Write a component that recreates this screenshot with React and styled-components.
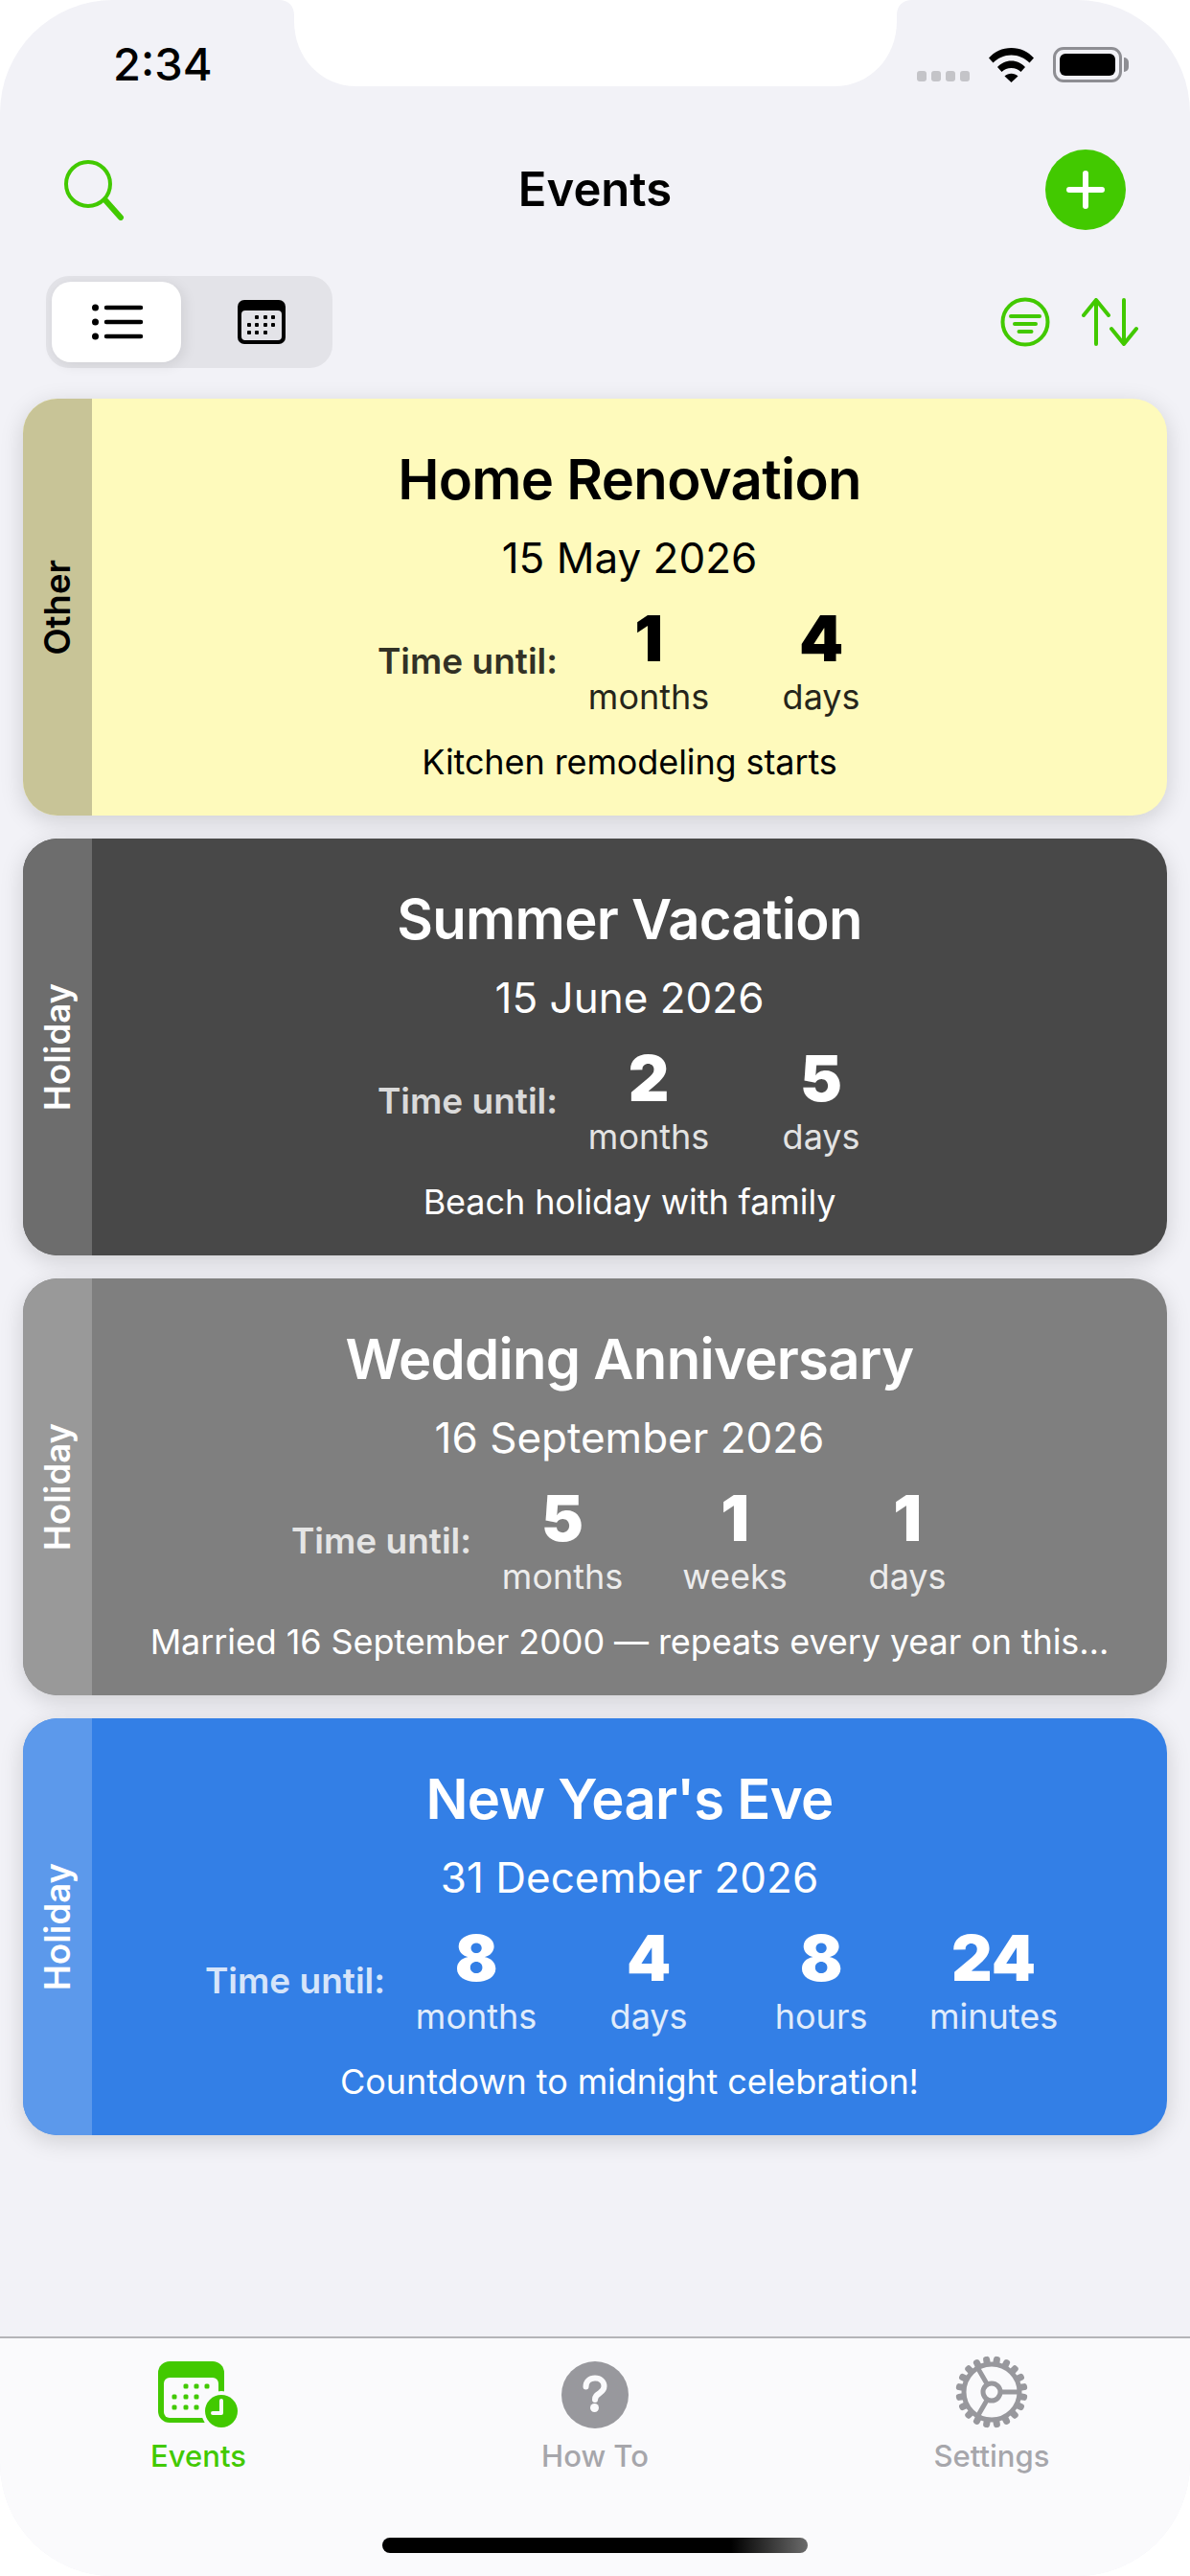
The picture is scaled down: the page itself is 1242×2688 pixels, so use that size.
import React from 'react';
import styled, { createGlobalStyle } from 'styled-components';

const GREEN = '#42c900';
const TAB_GREY = '#98989d';

const GlobalStyle = createGlobalStyle`
  html, body {
    margin: 0;
    padding: 0;
    background: #fff;
  }
  * {
    box-sizing: border-box;
  }
`;

// page shell
const Screen = styled.div`
  position: relative;
  width: 1242px;
  height: 2688px;
  display: flex;
  flex-direction: column;
  overflow: hidden;
  border-radius: 118px;
  background: #f2f2f7;
  font-family: Inter, "Noto Sans", "Liberation Sans", sans-serif;
  color: #000;
`;

const Notch = styled.svg`
  position: absolute;
  top: 0;
  left: 291px;
`;

const StatusBar = styled.div`
  height: 156px;
  padding: 43px 71px 0 118px;
  display: flex;
  align-items: flex-start;
  justify-content: space-between;
`;

const Clock = styled.span`
  font-size: 47px;
  line-height: 48px;
  font-weight: 500;
`;

const StatusIcons = styled.div`
  display: flex;
  align-items: center;
  height: 37px;
  margin-top: 6px;
`;

const SignalDots = styled.div`
  display: flex;
  gap: 5px;
  margin-top: 24px;
  margin-right: 20px;
`;

const SignalDot = styled.i`
  display: block;
  width: 10px;
  height: 11px;
  border-radius: 3px;
  background: #c4c4c8;
`;

const Battery = styled.div`
  width: 72px;
  height: 37px;
  margin-left: 20px;
  padding: 4px;
  border: 3px solid #8e8e93;
  border-radius: 11px;
  position: relative;
  &::after {
    content: '';
    position: absolute;
    right: -10px;
    top: 8px;
    width: 5px;
    height: 15px;
    border-radius: 0 5px 5px 0;
    background: #8e8e93;
  }
`;

const BatteryFill = styled.div`
  width: 100%;
  height: 100%;
  border-radius: 6px;
  background: #000;
`;

// header
const NavBar = styled.header`
  height: 84px;
  padding: 0 67px;
  display: grid;
  grid-template-columns: 1fr auto 1fr;
  align-items: center;
`;

const Title = styled.h1`
  margin: 0;
  font-size: 49px;
  line-height: 84px;
  font-weight: 600;
`;

const AddButton = styled.button`
  justify-self: end;
  width: 84px;
  height: 84px;
  padding: 0;
  border: 0;
  border-radius: 50%;
  background: ${GREEN};
  display: flex;
  align-items: center;
  justify-content: center;
`;

const Toolbar = styled.div`
  margin-top: 48px;
  padding: 0 53px 0 48px;
  display: flex;
  align-items: center;
  justify-content: space-between;
`;

const ViewSwitch = styled.div`
  width: 299px;
  height: 96px;
  padding: 6px;
  display: flex;
  border-radius: 24px;
  background: #e3e3e8;
`;

const ViewOption = styled.div`
  flex: 0 0 ${(p) => (p.$active ? '135px' : '152px')};
  padding-left: ${(p) => (p.$active ? '0' : '16px')};
  display: flex;
  align-items: center;
  justify-content: center;
  border-radius: 20px;
  background: ${(p) => (p.$active ? '#fff' : 'transparent')};
  box-shadow: ${(p) => (p.$active ? '3px 3px 14px rgba(0, 0, 0, 0.09)' : 'none')};
`;

const ToolActions = styled.div`
  display: flex;
  align-items: center;
  gap: 33px;
`;

// event cards
const CardList = styled.main`
  margin-top: 32px;
  padding: 0 24px;
  display: flex;
  flex-direction: column;
  gap: 24px;
`;

const Card = styled.article`
  height: 435px;
  display: flex;
  overflow: hidden;
  border-radius: 36px;
  background: ${(p) => p.$bg};
  color: ${(p) => p.$fg};
  box-shadow: 0 6px 24px rgba(0, 0, 0, 0.15);
`;

const CategoryStrip = styled.div`
  flex: 0 0 72px;
  display: flex;
  align-items: center;
  justify-content: center;
  background: ${(p) => p.$bg};
`;

const CategoryLabel = styled.span`
  writing-mode: vertical-rl;
  transform: rotate(180deg);
  font-size: 36.5px;
  line-height: 40px;
  font-weight: 600;
`;

const CardBody = styled.div`
  flex: 1;
  min-width: 0;
  padding-top: 48px;
  display: flex;
  flex-direction: column;
  align-items: center;
`;

const EventName = styled.h2`
  margin: 0;
  font-size: 58px;
  line-height: 72px;
  font-weight: 600;
  letter-spacing: -0.7px;
`;

const EventDate = styled.div`
  margin-top: 18px;
  font-size: 44px;
  line-height: 56px;
`;

const Countdown = styled.div`
  margin-top: 18px;
  display: flex;
  align-items: center;
`;

const CountdownLabel = styled.span`
  margin-right: 32px;
  font-size: 37px;
  font-weight: 600;
  opacity: 0.8;
`;

const Units = styled.div`
  display: flex;
  gap: 54px;
`;

const Unit = styled.div`
  width: 126px;
  display: flex;
  flex-direction: column;
  align-items: center;
`;

const UnitValue = styled.span`
  font-size: 66px;
  line-height: 76px;
  font-weight: 900;
`;

const UnitName = styled.span`
  font-size: 36px;
  line-height: 46px;
  opacity: 0.85;
  white-space: nowrap;
`;

const Note = styled.div`
  margin-top: 23px;
  font-size: 36px;
  line-height: 44px;
  letter-spacing: -0.1px;
  white-space: nowrap;
`;

// tab bar
const TabBar = styled.nav`
  margin-top: auto;
  height: 250px;
  padding-top: 18px;
  display: grid;
  grid-template-columns: repeat(3, 1fr);
  align-items: start;
  border-top: 2px solid #b4b4b8;
  background: #fafafc;
`;

const Tab = styled.div`
  display: flex;
  flex-direction: column;
  align-items: center;
  color: ${(p) => (p.$active ? GREEN : '#a6a6ab')};
`;

const TabIcon = styled.div`
  height: 76px;
  display: flex;
  align-items: flex-end;
  justify-content: center;
`;

const TabLabel = styled.span`
  margin-top: 11px;
  font-size: 31px;
  line-height: 36px;
  font-weight: 500;
`;

const HomeIndicator = styled.div`
  position: absolute;
  left: 399px;
  bottom: 24px;
  width: 444px;
  height: 16px;
  border-radius: 8px;
  background: linear-gradient(90deg, #000 0, #000 82%, #6b6b6b 100%);
`;

const EVENTS = [
  {
    name: 'Home Renovation',
    date: '15 May 2026',
    category: 'Other',
    note: 'Kitchen remodeling starts',
    bg: '#fefabc',
    strip: '#c8c497',
    fg: '#000',
    units: [['1', 'months'], ['4', 'days']],
  },
  {
    name: 'Summer Vacation',
    date: '15 June 2026',
    category: 'Holiday',
    note: 'Beach holiday with family',
    bg: '#484848',
    strip: '#6d6d6d',
    fg: '#fff',
    units: [['2', 'months'], ['5', 'days']],
  },
  {
    name: 'Wedding Anniversary',
    date: '16 September 2026',
    category: 'Holiday',
    note: 'Married 16 September 2000 — repeats every year on this…',
    bg: '#7f7f7f',
    strip: '#999999',
    fg: '#fff',
    units: [['5', 'months'], ['1', 'weeks'], ['1', 'days']],
  },
  {
    name: "New Year's Eve",
    date: '31 December 2026',
    category: 'Holiday',
    note: 'Countdown to midnight celebration!',
    bg: '#337fe6',
    strip: '#5c99eb',
    fg: '#fff',
    units: [['8', 'months'], ['4', 'days'], ['8', 'hours'], ['24', 'minutes']],
  },
];

const WifiIcon = () => (
  <svg width="47" height="36" viewBox="0 0 47 36">
    <path d="M0 10.500C6 4 14 0 23.500 0S41 4 47 10.500l-4.500 5C37.500 10.500 31 7.500 23.500 7.500S9.500 10.500 4.500 15.500z" />
    <path d="M9 20C13 16 17.500 13.500 23.500 13.500S34 16 38 20l-4.500 5c-2.800-2.600-6-4-10-4s-7.200 1.400-10 4z" />
    <path d="M16.500 29.500c2-1.800 4.300-2.700 7-2.700s5 .9 7 2.700l-7 6.500z" />
  </svg>
);

const SearchIcon = () => (
  <svg width="63" height="63" viewBox="0 0 63 63" fill="none" stroke={GREEN} strokeLinecap="round">
    <circle cx="25" cy="25" r="23" strokeWidth="4" />
    <path d="M43 42 L59 60" strokeWidth="6" />
  </svg>
);

const PlusIcon = () => (
  <svg width="40" height="40" viewBox="0 0 40 40" stroke="#fff" strokeWidth="6" strokeLinecap="round">
    <path d="M20 3V37M3 20H37" />
  </svg>
);

const ListIcon = () => (
  <svg width="56" height="40" viewBox="0 0 56 40" stroke="#000" strokeWidth="4.500" strokeLinecap="round">
    <path d="M17 5H53M17 20H53M17 35H53" />
    <g fill="#000" stroke="none">
      <circle cx="5.500" cy="5" r="3.500" />
      <circle cx="5.500" cy="20" r="3.500" />
      <circle cx="5.500" cy="35" r="3.500" />
    </g>
  </svg>
);

const GridCalendarIcon = () => {
  const dots = [
    [20, 18], [29, 18], [37, 18],
    [12, 26], [20, 26], [29, 26], [37, 26],
    [12, 34], [20, 34], [29, 34],
  ];
  return (
    <svg width="50" height="46" viewBox="0 0 50 46">
      <rect width="50" height="46" rx="7" />
      <rect x="4" y="11" width="42" height="31" rx="4" fill="#e3e3e8" />
      {dots.map(([x, y]) => (
        <rect key={`${x}-${y}`} x={x - 2} y={y - 2} width="4" height="4" rx="1" />
      ))}
    </svg>
  );
};

const FilterIcon = () => (
  <svg width="52" height="52" viewBox="0 0 52 52" fill="none" stroke={GREEN} strokeLinecap="round">
    <circle cx="26" cy="26" r="23.500" strokeWidth="4" />
    <path d="M11 20H41M15 28H37M19.500 36H32.500" strokeWidth="4" />
  </svg>
);

const SortIcon = () => (
  <svg width="60" height="50" viewBox="0 0 60 50" fill="none" stroke={GREEN} strokeWidth="4" strokeLinecap="round" strokeLinejoin="round">
    <path d="M15 48V3M2 18L15 2L28 18" />
    <path d="M44 2V47M31 32L44 48L57 32" />
  </svg>
);

const EventsTabIcon = () => {
  const dots = [
    [29, 26], [40, 26], [51, 26],
    [17, 37], [29, 37], [40, 37],
    [17, 48], [29, 48], [40, 48],
  ];
  return (
    <svg width="84" height="70" viewBox="0 0 84 70">
      <rect width="69" height="64" rx="12" fill={GREEN} />
      <rect x="6" y="17" width="57" height="42" rx="6" fill="#fafafc" />
      {dots.map(([x, y]) => (
        <rect key={`${x}-${y}`} x={x - 2.500} y={y - 2.500} width="5" height="5" rx="1.500" fill={GREEN} />
      ))}
      <circle cx="66" cy="52" r="21" fill="#fafafc" />
      <circle cx="66" cy="52" r="17" fill={GREEN} />
      <path d="M66 41V54H57" fill="none" stroke="#fafafc" strokeWidth="4" strokeLinecap="round" strokeLinejoin="round" />
    </svg>
  );
};

const HelpTabIcon = () => (
  <svg width="70" height="70" viewBox="0 0 70 70">
    <circle cx="35" cy="35" r="35" fill={TAB_GREY} />
    <path d="M25.500 26.500c0-5.500 4-9 9.500-9s9.500 3.500 9.500 8.500c0 3.500-1.800 5.200-4.500 7-3 2-5 3.200-5 7" fill="none" stroke="#fafafc" strokeWidth="6" strokeLinecap="round" />
    <circle cx="34.500" cy="48.500" r="4.500" fill="#fafafc" />
  </svg>
);

const GearTabIcon = () => {
  const teeth = Array.from({ length: 20 }, (_, i) => i * 18);
  return (
    <svg width="76" height="76" viewBox="-38 -38 76 76">
      <g fill={TAB_GREY}>
        {teeth.map((deg) => (
          <rect key={deg} x="-3.500" y="-37.500" width="7" height="10" rx="3" transform={`rotate(${deg + 9})`} />
        ))}
      </g>
      <g fill="none" stroke={TAB_GREY}>
        <circle r="29" strokeWidth="5" />
        <circle r="9" strokeWidth="5" />
        <path d="M9 0H29M-4.500 -7.800L-14.500 -25.100M-4.500 7.800L-14.500 25.100" strokeWidth="5" />
      </g>
    </svg>
  );
};

const EventCard = ({ event }) => (
  <Card $bg={event.bg} $fg={event.fg}>
    <CategoryStrip $bg={event.strip}>
      <CategoryLabel>{event.category}</CategoryLabel>
    </CategoryStrip>
    <CardBody>
      <EventName>{event.name}</EventName>
      <EventDate>{event.date}</EventDate>
      <Countdown>
        <CountdownLabel>Time until:</CountdownLabel>
        <Units>
          {event.units.map(([value, name]) => (
            <Unit key={name}>
              <UnitValue>{value}</UnitValue>
              <UnitName>{name}</UnitName>
            </Unit>
          ))}
        </Units>
      </Countdown>
      <Note>{event.note}</Note>
    </CardBody>
  </Card>
);

export default function App() {
  return (
    <>
      <GlobalStyle />
      <Screen>
        <Notch width="661" height="90" viewBox="0 0 661 90" fill="#fff">
          <path d="M0 0H661C651 0 645 6 645 16V22C645 60 617 90 580 90H81C44 90 16 60 16 22V16C16 6 10 0 0 0Z" />
        </Notch>

        <StatusBar>
          <Clock>2:34</Clock>
          <StatusIcons>
            <SignalDots>
              <SignalDot />
              <SignalDot />
              <SignalDot />
              <SignalDot />
            </SignalDots>
            <WifiIcon />
            <Battery>
              <BatteryFill />
            </Battery>
          </StatusIcons>
        </StatusBar>

        <NavBar>
          <SearchIcon />
          <Title>Events</Title>
          <AddButton>
            <PlusIcon />
          </AddButton>
        </NavBar>

        <Toolbar>
          <ViewSwitch>
            <ViewOption $active>
              <ListIcon />
            </ViewOption>
            <ViewOption>
              <GridCalendarIcon />
            </ViewOption>
          </ViewSwitch>
          <ToolActions>
            <FilterIcon />
            <SortIcon />
          </ToolActions>
        </Toolbar>

        <CardList>
          {EVENTS.map((event) => (
            <EventCard key={event.name} event={event} />
          ))}
        </CardList>

        <TabBar>
          <Tab $active>
            <TabIcon>
              <EventsTabIcon />
            </TabIcon>
            <TabLabel>Events</TabLabel>
          </Tab>
          <Tab>
            <TabIcon>
              <HelpTabIcon />
            </TabIcon>
            <TabLabel>How To</TabLabel>
          </Tab>
          <Tab>
            <TabIcon>
              <GearTabIcon />
            </TabIcon>
            <TabLabel>Settings</TabLabel>
          </Tab>
        </TabBar>

        <HomeIndicator />
      </Screen>
    </>
  );
}
